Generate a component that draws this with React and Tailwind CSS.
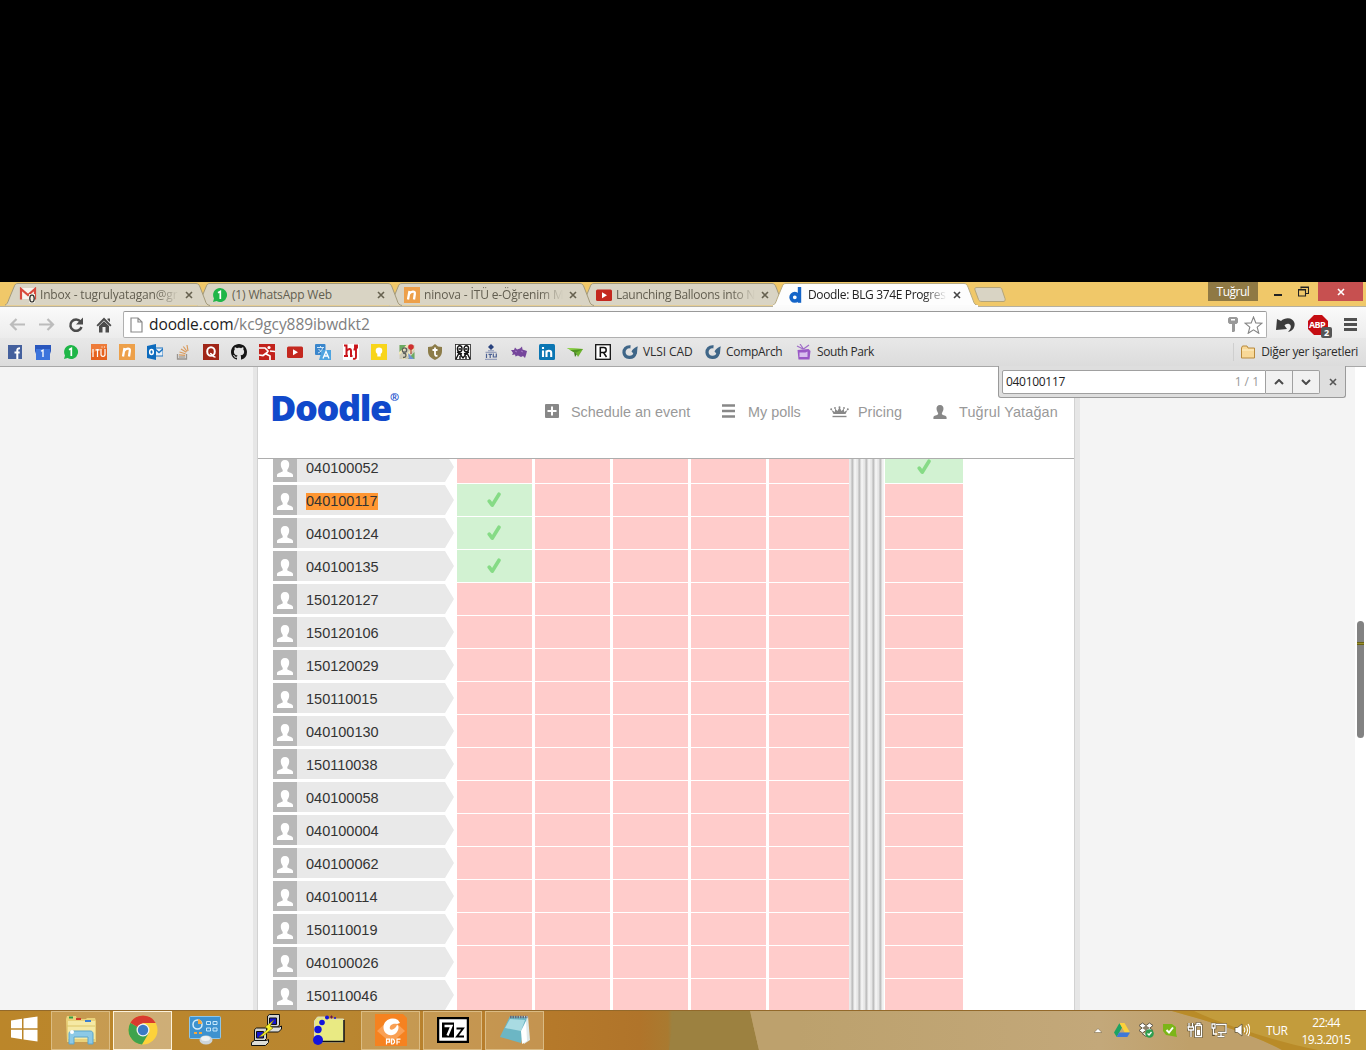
import React from "react";

const UI = "font-['Open_Sans','Noto_Sans',sans-serif]";

/* ---------- small helpers ---------- */

function Svg({ w = 16, h = w, vb, className = "", children }) {
  return (
    <svg width={w} height={h} viewBox={vb || `0 0 ${w} ${h}`} className={"block shrink-0 " + className} fill="none">
      {children}
    </svg>
  );
}

const Close = ({ color = "#66614f", s = 8 }) => (
  <Svg w={s} vb="0 0 8 8">
    <path d="M1 1l6 6M7 1L1 7" stroke={color} strokeWidth="1.600" />
  </Svg>
);

/* ---------- favicons ---------- */

const Gmail = () => (
  <Svg w={18} h={16} className="-ml-[1px]">
    <path d="M1 1h16v11H1z" fill="#f7f3ee" />
    <path d="M2 12.500V2l7 6 7-6v10.500" stroke="#d8493c" strokeWidth="2.200" />
    <rect x="10" y="7" width="6" height="9" fill="#f3efe2" />
    <ellipse cx="13" cy="11.500" rx="2.200" ry="3.500" stroke="#222" strokeWidth="1.200" />
  </Svg>
);
const WhatsApp = () => (
  <Svg>
    <path d="M8 1a7 7 0 1 1-3.400 13.100L1 15l1-3.500A7 7 0 0 1 8 1z" fill="#1fb648" />
    <path d="M6 5.800L8.300 4.500V12" stroke="#fff" strokeWidth="1.700" />
  </Svg>
);
const Ninova = () => (
  <Svg>
    <rect width="16" height="16" fill="#eda04a" />
    <path d="M5.500 4L4 12.500M5 7C7 4 11.500 3.500 10.800 7L10 12.500" stroke="#fff" strokeWidth="2.300" />
  </Svg>
);
const YouTube = () => (
  <Svg>
    <rect y="2.500" width="16" height="11.500" rx="1.500" fill="#c4281f" />
    <path d="M6 5.200v6l5-3z" fill="#fff" />
  </Svg>
);
const DoodleD = () => (
  <Svg>
    <circle cx="6.800" cy="10.300" r="3.700" stroke="#1565c8" strokeWidth="3.600" />
    <path d="M11.500 0v15.800" stroke="#1565c8" strokeWidth="3.400" />
  </Svg>
);
const Facebook = () => (
  <Svg>
    <rect x="1" y="1" width="14" height="14" fill="#44609d" />
    <path d="M10.300 15V6.200c0-1.700.7-2 2.700-2M7.500 8.500h5.200" stroke="#fff" strokeWidth="2" />
  </Svg>
);
const Calendar = () => (
  <Svg>
    <path d="M0 1h16v6l-1 3H1L0 7z" fill="#2a57bd" />
    <path d="M1 5h14v11H1z" fill="#3c74dc" />
    <path d="M6 7.300l2-1.200V13" stroke="#fff" strokeWidth="1.300" />
  </Svg>
);
const Itu = () => (
  <Svg>
    <rect width="16" height="16" fill="#e5611e" />
    <path d="M0 0h16v4L0 9z" fill="#ee7c3a" />
    <path d="M2 5v8M4.500 5.800h4M6.500 5v8M10 5v5.500c0 2.500 4 2.500 4 0V5" stroke="#fff" strokeWidth="1.200" />
    <path d="M10.500 3h1M13 3h1" stroke="#fff" />
  </Svg>
);
const Outlook = () => (
  <Svg>
    <rect x="7" y="4" width="9" height="8" fill="#e8f0f8" stroke="#1a72c0" />
    <path d="M8 5l4 3.500L16 5" stroke="#1a72c0" strokeWidth="1.500" />
    <path d="M0 2l9-2v16l-9-2z" fill="#0d6bbd" />
    <ellipse cx="4.500" cy="8" rx="1.800" ry="2.500" stroke="#fff" strokeWidth="1.500" />
  </Svg>
);
const Stack = () => (
  <Svg>
    <path d="M2.500 10v5h9v-5" stroke="#98938d" strokeWidth="1.300" />
    <path d="M4 13h6" stroke="#9a948c" strokeWidth="1.200" />
    <path d="M4 10.800l6 .6M4.500 8l6 1.800M6 5l5.300 3.300M8.300 2.500l3.800 5M12 1l1 6" stroke="#d99a5c" strokeWidth="1.200" />
  </Svg>
);
const Quora = () => (
  <Svg>
    <rect width="16" height="16" fill="#a02517" />
    <ellipse cx="8" cy="7.500" rx="3.800" ry="4.300" stroke="#fff" strokeWidth="2" />
    <path d="M7 9.500c3 0 2 4 5.500 3.500" stroke="#fff" strokeWidth="1.500" />
  </Svg>
);
const Github = () => (
  <Svg>
    <path
      fill="#151515"
      d="M8 0C3.580 0 0 3.580 0 8c0 3.540 2.290 6.530 5.470 7.590.4.070.55-.17.55-.38 0-.19-.01-.82-.01-1.490-2.010.37-2.530-.49-2.690-.94-.09-.23-.48-.94-.82-1.130-.28-.15-.68-.52-.01-.53.63-.01 1.080.58 1.230.82.720 1.210 1.870.87 2.330.66.070-.52.280-.87.510-1.070-1.780-.2-3.640-.89-3.640-3.950 0-.87.310-1.590.82-2.150-.08-.2-.36-1.020.08-2.120 0 0 .67-.21 2.200.82.640-.18 1.320-.27 2-.27s1.360.09 2 .27c1.530-1.040 2.200-.82 2.200-.82.440 1.100.160 1.920.080 2.120.510.560.820 1.270.820 2.150 0 3.070-1.870 3.750-3.650 3.950.290.250.540.730.540 1.480 0 1.070-.01 1.930-.01 2.200 0 .210.150.460.550.380A8.010 8.010 0 0 0 16 8c0-4.420-3.580-8-8-8z"
    />
  </Svg>
);
const RedRunner = () => (
  <Svg>
    <path d="M0 0h16v16H0z" fill="#c2221c" />
    <circle cx="10" cy="3.500" r="1.600" fill="#fff" />
    <path d="M0 4h6l3 3-2 3 4 2v4M7.500 9L4 11.500 0 11M11 7l5 .5" stroke="#fff" strokeWidth="1.700" />
  </Svg>
);
const Translate = () => (
  <Svg>
    <rect width="10.500" height="11" rx="1" fill="#3a86cc" />
    <path d="M2 3.500h7M5.500 2v2M3 9c3-1 4-3 4.500-5M3.500 5l4 4" stroke="#cfe6f8" />
    <path d="M7 6h9v10H4z" fill="#4ea4e0" />
    <path d="M8 14.500l3-7 3 7M9.500 12h4" stroke="#fff" strokeWidth="1.300" />
  </Svg>
);
const Hj = () => (
  <Svg>
    <rect width="16" height="16" fill="#fff" />
    <path d="M1 1.500h2.500V12M1 12h4M3.500 7c2-3 4.500-2.500 4.500 0v5M7 12h2.500" stroke="#c9141a" strokeWidth="2" />
    <path d="M10.500 5.500H13V13c0 2-1.500 2-3 1.700M12 1.500h2v2h-2z" stroke="#c9141a" strokeWidth="1.900" />
  </Svg>
);
const Keep = () => (
  <Svg>
    <rect width="16" height="16" fill="#f8d51b" />
    <circle cx="8" cy="6.800" r="3.300" fill="#fff" />
    <path d="M6.300 9h3.400v3.500H6.300z" fill="#fff" />
  </Svg>
);
const Maps = () => (
  <Svg>
    <rect x=".5" y="1" width="15" height="14" fill="#cfccba" />
    <path d="M.5 1h7l-7 7zM15.500 8v7H9z" fill="#6cab62" />
    <path d="M0 10L9 1M4 15L15 4" stroke="#f2e9b8" strokeWidth="2" />
    <path d="M9 9l6 6h-5z" fill="#6e92d4" />
    <circle cx="5.500" cy="6" r="2.200" stroke="#5b5f5b" strokeWidth="1.300" />
    <path d="M4 9c4 0 4 4.500 0 4.500" stroke="#5b5f5b" strokeWidth="1.300" />
    <circle cx="12" cy="3" r="2.800" fill="#cf3030" />
    <path d="M12 5v5" stroke="#a32626" />
  </Svg>
);
const Turnitin = () => (
  <Svg>
    <path d="M1 3l4-.5L8 0l3 2.500 4 .5v4c0 5-3 7-7 9-4-2-7-4-7-9z" fill="#8c7c49" />
    <path d="M8 3.500V10c0 2 1 2 2.500 1.700M5.500 6h5" stroke="#fff" strokeWidth="1.800" />
  </Svg>
);
const Faces = () => (
  <Svg>
    <rect x=".5" y=".5" width="15" height="15" fill="#fff" stroke="#222" strokeWidth=".8" />
    <ellipse cx="4.700" cy="4.700" rx="2.300" ry="3" stroke="#111" strokeWidth="1.400" />
    <ellipse cx="11.300" cy="4.700" rx="2.300" ry="3" stroke="#111" strokeWidth="1.400" />
    <path d="M3.500 5H6M10 5h2.500M1 15l3-6 4 5 4-5 3 6M2 8l5 2M9 10l5-2M5 12v3M11 12v3" stroke="#111" strokeWidth="1.400" />
  </Svg>
);
const ItuBee = () => (
  <Svg>
    <path d="M8 0l3 3-3 3-3-3z" fill="#29427e" />
    <path d="M2.500 8.300h11M5 6.800h6" stroke="#8793b5" />
    <path d="M3.500 9.800V14M5.500 10.300h3.500M7.200 10v4M10.300 9.500V13h3V9.500" stroke="#4a5f92" strokeWidth="1.200" />
    <path d="M2 15.300h12" stroke="#8793b5" />
  </Svg>
);
const Bat = () => (
  <Svg>
    <path d="M0 6l3 0 1-2.500 2 2 3-1 2-2 .5 3 4.500 1.500-1 4-1 3-2-2-2 1-3-1.500-2.500 1L4 10.500 1 11l1-2z" fill="#75469b" />
    <path d="M4 7l2 1M10 7l2 1" stroke="#a67cc6" />
  </Svg>
);
const LinkedIn = () => (
  <Svg>
    <rect width="16" height="16" rx="1.500" fill="#0b76b3" />
    <path d="M4 6.500V13M4 3v2M7.500 13V6.500M7.500 9c0-3 4.700-3 4.700 0v4" stroke="#fff" strokeWidth="2.100" />
  </Svg>
);
const Plane = () => (
  <Svg>
    <path d="M0 4l16 1-5 8-2-4z" fill="#6db52f" />
    <path d="M0 4l16 1-9 3z" fill="#8fd24a" />
    <path d="M7 8l1 5 2-3z" fill="#3f7a1c" />
    <path d="M3 6L16 5 8 9z" fill="#4f9422" />
  </Svg>
);
const RBox = () => (
  <Svg>
    <rect x=".7" y=".7" width="14.600" height="14.600" fill="#fff" stroke="#111" strokeWidth="1.300" />
    <path d="M5.300 13V3.500h3.500c3.200 0 3.200 5 0 5H5.300M8.500 8.500l3 4.500" stroke="#111" strokeWidth="1.500" />
  </Svg>
);
const Swirl = () => (
  <Svg>
    <path d="M8.500 2.800C4 2.300 1.800 5.500 2 8.500c.6 6.300 9.600 6.500 11.200.8" stroke="#3f6688" strokeWidth="3.200" />
    <path d="M15.800 2.500c-1 0-4.500 1.500-6.300 5l2.300 2.500 3 0c.6-3 .3-5 1-7.500z" fill="#3f6688" />
  </Svg>
);
const Tv = () => (
  <Svg>
    <path d="M4 0l3.500 5M1 2l6 3M13 1L7.500 5" stroke="#a06cc8" strokeWidth="1.200" />
    <path d="M1.500 6l11-1 2 2-1 8.500H2.500z" fill="#9a58c6" />
    <path d="M3.500 8.500h6l2-1V13h-8z" fill="#d9bfee" />
  </Svg>
);
const Folder = () => (
  <Svg>
    <path d="M1.500 4l1-2h4.500l1 2h6.500v10h-13z" fill="#f8d897" stroke="#b98a3c" />
    <path d="M2 6h12" stroke="#fdefc8" />
  </Svg>
);

/* ---------- tabs ---------- */

const tabs = [
  { title: "Inbox - tugrulyatagan@gr", icon: <Gmail />, track: "tracking-[-0.17px]", z: "z-[5]", fade: true },
  { title: "(1) WhatsApp Web", icon: <WhatsApp />, track: "tracking-[-0.17px]", z: "z-[4]" },
  { title: "ninova - İTÜ e-Öğrenim M", icon: <Ninova />, track: "tracking-[-0.14px]", z: "z-[3]", fade: true },
  { title: "Launching Balloons into N", icon: <YouTube />, track: "tracking-[-0.28px]", z: "z-[2]", fade: true },
  { title: "Doodle: BLG 374E Progres", icon: <DoodleD />, track: "tracking-[-0.35px]", z: "z-[6]", active: true, fade: true },
];

function Tab({ t }) {
  return (
    <div className={"relative flex h-[25px] w-[192px] shrink-0 items-center pl-[15px] " + t.z}>
      <svg className="absolute left-0 top-0" width="206" height="25" fill="none">
        <path
          d="M-1 23.500C2 23 3 20 4 17L9 5C10 2 11 1.500 13 1.500H191C193 1.500 194 2.500 195 5L200 18C201 21.500 202 23 205 23.500"
          fill={t.active ? "#fdfdfd" : "#d9d4c4"}
          stroke={t.active ? "#b9ac83" : "#a39a7b"}
        />
        {t.active && <path d="M0 24h205" stroke="#fbfbfb" strokeWidth="2" />}
      </svg>
      <div className="relative flex w-5 justify-start">{t.icon}</div>
      <div
        className={
          "relative w-[145px] whitespace-nowrap text-[12px] leading-[18px] " +
          t.track +
          (t.fade ? " [mask-image:linear-gradient(to_right,black_116px,transparent_139px)]" : "") +
          (t.active ? " text-[#222]" : " text-[#625e50]")
        }
      >
        {t.title}
      </div>
      <div className="relative">
        <Close color={t.active ? "#444" : "#66614f"} />
      </div>
    </div>
  );
}

function TabStrip() {
  return (
    <div className="flex h-6 items-start bg-[#f0c869] pl-[5px]">
      {tabs.map((t) => (
        <Tab key={t.title} t={t} />
      ))}
      <svg className="ml-[9px] mt-[4px]" width="32" height="18" fill="none">
        <path d="M1 4C.5 2 1 1.500 3 1.500h22c2 0 2.500.5 3 2l3 9c.5 2 0 3-2 3H8c-2 0-3-.5-3.500-2z" fill="#d9d4c4" stroke="#b5a577" />
      </svg>
      <div className="ml-auto flex h-[19px] items-center">
        <div className="flex h-[19px] w-[50px] items-center justify-center bg-[#8f7944] text-[12px] tracking-[-0.5px] text-white">Tuğrul</div>
        <div className="ml-[16px] mt-[6px] h-[2px] w-2 bg-[#222]" />
        <Svg w={11} h={11} className="ml-[16px]">
          <path d="M3 2.500V1h7.500v6.500H8M.5 3.500h7v6.500h-7zM3 1.500h7.500M.5 4h7" stroke="#222" strokeWidth="1.100" />
        </Svg>
        <div className="ml-[9px] mr-[3px] flex h-[19px] w-[45px] items-center justify-center bg-[#c75050]">
          <Close color="#fff" />
        </div>
      </div>
    </div>
  );
}

/* ---------- toolbar ---------- */

function Toolbar() {
  return (
    <div className="flex h-[32px] items-center border-t border-[#b5b0a0] bg-gradient-to-b from-[#fafafa] to-[#ececec] pt-[4px]">
      <Svg w={17} h={15} className="ml-[9px]">
        <path d="M7.500 2L2 7.500 7.500 13M2.500 7.500H16" stroke="#bcbcbc" strokeWidth="2.200" />
      </Svg>
      <Svg w={17} h={15} className="ml-[12px]">
        <path d="M9.500 2L15 7.500 9.500 13M14.500 7.500H1" stroke="#bcbcbc" strokeWidth="2.200" />
      </Svg>
      <Svg w={16} h={16} className="ml-[13px]">
        <path d="M12.500 4.500A5.700 5.700 0 1 0 13.500 10" stroke="#4c4c4c" strokeWidth="2.500" />
        <path d="M15 .5v7H8z" fill="#4c4c4c" />
      </Svg>
      <Svg w={16} h={16} className="ml-[12px]">
        <path d="M8 .5l7.500 7.800-1.300 1.200L8 3.500 1.800 9.500.5 8.300zM11.500 1.500H14V5l-2.500-2.300z" fill="#4c4c4c" />
        <path d="M3 9l5-4.700L13 9v6.500H9.500V10h-3v5.500H3z" fill="#4c4c4c" />
      </Svg>
      <div className="ml-[11px] flex h-[27px] w-[1144px] items-center rounded-[2px] border border-[#b0b0b0] border-t-[#999] bg-white pl-[6px]">
        <Svg w={13} h={16}>
          <path d="M1 1h7l4 4v10H1zM8 1v4h4" stroke="#8a8a8a" strokeWidth="1.200" />
        </Svg>
        <div className="ml-[6px] whitespace-nowrap pb-[2px] text-[15.5px] leading-5 tracking-[-0.09px] text-[#808080]">
          <span className="text-[#1c1c1c]">doodle.com</span>/kc9gcy889ibwdkt2
        </div>
        <Svg w={10} h={15} className="ml-auto">
          <path fillRule="evenodd" d="M1.500 0h7L10 1.500v4L8.500 7H7v7l-1 1H4V7H1.500L0 5.500v-4zM3 2v1.500h4V2z" fill="#999" />
        </Svg>
        <Svg w={19} h={18} className="ml-[6px] mr-[3px]">
          <path d="M9.500 1l2.300 5.900 6.200.3-4.800 4 1.600 6.100-5.300-3.400-5.300 3.400 1.600-6.100-4.800-4 6.200-.3z" stroke="#858585" strokeWidth="1.100" />
        </Svg>
      </div>
      <Svg w={20} h={17} className="ml-[9px]">
        <path d="M1 3l4 2c4-4 12-4 13.500 2 .7 4-1.500 8-6.500 9 3-3 4-7 1-8-2-.5-3.500.5-4.500 1.500l2.500 3.500-11 1z" fill="#3c3c3c" />
      </Svg>
      <div className="relative ml-[12px] h-[20px] w-[24px]">
        <Svg w={20} h={20}>
          <path d="M6 0h8l6 6v8l-6 6H6l-6-6V6z" fill="#c50d12" />
        </Svg>
        <span className="absolute left-[1px] top-[4px] text-[9px] font-bold leading-[11px] tracking-[-0.6px] text-white">ABP</span>
        <span className="absolute left-[13px] top-[12px] h-[11px] w-[11px] rounded-[2px] bg-[#555] text-center text-[9px] font-bold leading-[11px] text-white">2</span>
      </div>
      <Svg w={13} h={13} className="ml-[12px]">
        <path d="M0 1.500h13M0 6.500h13M0 11.500h13" stroke="#505050" strokeWidth="2.800" />
      </Svg>
    </div>
  );
}

const bookmarkIcons = [
  Facebook, Calendar, WhatsApp, Itu, Ninova, Outlook, Stack, Quora, Github, RedRunner, YouTube,
  Translate, Hj, Keep, Maps, Turnitin, Faces, ItuBee, Bat, LinkedIn, Plane, RBox,
];

function Bookmark({ icon, label, cls }) {
  return (
    <div className={"flex shrink-0 items-center gap-[5px] whitespace-nowrap text-[12px] text-[#2c2c2c] " + cls}>
      {icon}
      <span>{label}</span>
    </div>
  );
}

function Bookmarks() {
  return (
    <div className="flex h-[29px] items-center border-b border-[#a8a8a8] bg-gradient-to-b from-[#e8e8e8] to-[#dcdcdc] pl-[1px]">
      {bookmarkIcons.map((Icon, i) => (
        <div key={i} className="flex w-7 shrink-0 justify-center">
          <Icon />
        </div>
      ))}
      <Bookmark icon={<Swirl />} label="VLSI CAD" cls="ml-[5px] w-[83px] tracking-[-0.1px]" />
      <Bookmark icon={<Swirl />} label="CompArch" cls="w-[90px] tracking-[-0.3px]" />
      <Bookmark icon={<Tv />} label="South Park" cls="ml-[1px] tracking-[-0.4px]" />
      <div className="ml-auto mr-[8px] flex items-center border-l border-[#cfcfcf] pl-[6px]">
        <Bookmark icon={<Folder />} label="Diğer yer işaretleri" cls="tracking-[-0.3px]" />
      </div>
    </div>
  );
}

/* ---------- find bar ---------- */

function FindBar() {
  return (
    <div className={"absolute left-[998px] top-[-1px] z-20 flex h-[32px] w-[348px] items-center rounded-b-[3px] border border-t-0 border-[#9a9a9a] bg-[#dedede] pl-[3px] text-[12px] " + UI}>
      <div className="flex h-6 w-[264px] items-center justify-between rounded-l-[2px] border border-[#a0a0a0] bg-white pl-[3px] pr-[6px]">
        <span className="tracking-[-0.3px] text-[#222]">040100117</span>
        <span className="text-[#999]">1 / 1</span>
      </div>
      <div className="flex h-6 w-[27px] items-center justify-center border-y border-r border-[#a0a0a0] bg-[#f1f1f1]">
        <Svg w={10} h={6}>
          <path d="M1 5l4-4 4 4" stroke="#4a4a4a" strokeWidth="2" />
        </Svg>
      </div>
      <div className="flex h-6 w-[27px] items-center justify-center rounded-r-[2px] border-y border-r border-[#a0a0a0] bg-[#f1f1f1]">
        <Svg w={10} h={6}>
          <path d="M1 1l4 4 4-4" stroke="#4a4a4a" strokeWidth="2" />
        </Svg>
      </div>
      <div className="ml-[9px]">
        <Close color="#555" />
      </div>
    </div>
  );
}

/* ---------- poll page ---------- */

const Person = ({ color = "#fff", w = 16, h = 17 }) => (
  <Svg w={w} h={h} vb="0 0 16 17">
    <path d="M8 0c3 0 4.500 2 4.200 5C12 7.500 11 8.500 10.300 10v1.200c1 1.300 5.700 1.300 5.700 4V17H0v-1.800c0-2.700 4.700-2.700 5.700-4V10C5 8.500 4 7.500 3.800 5 3.500 2 5 0 8 0z" fill={color} />
  </Svg>
);

const Check = () => (
  <Svg w={14} h={16} className="mr-[1px]">
    <path d="M2.200 9.200l3 4L12 2.200" stroke="#86db86" strokeWidth="3.600" strokeLinecap="round" strokeLinejoin="round" />
  </Svg>
);

const people = [
  { id: "040100052", picks: [5] },
  { id: "040100117", picks: [0], found: true },
  { id: "040100124", picks: [0] },
  { id: "040100135", picks: [0] },
  ...["150120127", "150120106", "150120029", "150110015", "040100130", "150110038", "040100058", "040100004", "040100062", "040100114", "150110019", "040100026", "150110046"].map(
    (id) => ({ id, picks: [] })
  ),
];

function Cell({ on, cls }) {
  return (
    <div className={"flex h-8 shrink-0 items-center justify-center " + (on ? "bg-[#d2f2d2] " : "bg-[#ffcccb] ") + cls}>
      {on && <Check />}
    </div>
  );
}

function Row({ p }) {
  const on = (i) => p.picks.includes(i);
  return (
    <div className="flex h-[33px] pl-[15px]">
      <div className="mr-[3px] mt-[1px] flex h-[30px] w-[181px] shrink-0 items-center bg-[#e9e9e9] [clip-path:polygon(0_0,172px_0,100%_50%,172px_100%,0_100%)]">
        <div className="flex h-full w-6 items-end justify-center bg-[#b8b8b8] pb-[5px]">
          <Person />
        </div>
        <span className={"ml-[9px] mt-[2px] text-[14.500px] leading-[17px] text-[#333] " + (p.found ? "bg-[#ff9632]" : "")}>{p.id}</span>
      </div>
      <Cell on={on(0)} cls="mr-[3px] w-[75px]" />
      <Cell on={on(1)} cls="mr-[3px] w-[75px]" />
      <Cell on={on(2)} cls="mr-[3px] w-[75px]" />
      <Cell on={on(3)} cls="mr-[3px] w-[75px]" />
      <Cell on={on(4)} cls="w-[80px]" />
      <div className="h-[33px] w-[36px] shrink-0 border-r border-white bg-[repeating-linear-gradient(to_right,#ececec_0px,#e4e4e4_2px,#b9b9b9_3px,#c4c4c4_4px,#efefef_5px,#f4f4f4_7px)]" />
      <Cell on={on(5)} cls="w-[78px]" />
    </div>
  );
}

function Header() {
  return (
    <div className="flex h-[92px] shrink-0 items-center border-b border-[#adadad] pl-[14px] text-[14.4px] text-[#999]">
      <div className={"relative mt-[-9px] h-10 w-[273px] whitespace-nowrap text-[36px] font-extrabold leading-10 tracking-[-1.4px] text-[#1149cb] " + UI}>
        <span className="-ml-[2px]">Doodle</span>
        <span className="absolute left-[118px] top-[3px] text-[11px] font-bold leading-[12px] tracking-normal">®</span>
      </div>
      <div className="flex w-[177px] items-center gap-[12px]">
        <Svg w={14} className="-mt-[2px]">
          <rect width="14" height="14" rx="1" fill="#888" />
          <path d="M7 2.500v9M2.500 7h9" stroke="#fff" strokeWidth="2" />
        </Svg>
        <span className="whitespace-nowrap">Schedule an event</span>
      </div>
      <div className="flex w-[108px] items-center gap-[13px]">
        <Svg w={13} h={14} className="-mt-[2px]">
          <path d="M0 1.500h13M0 7h13M0 12.500h13" stroke="#888" strokeWidth="2.700" />
        </Svg>
        <span className="whitespace-nowrap">My polls</span>
      </div>
      <div className="flex w-[103px] items-center gap-[9px]">
        <Svg w={19} h={12}>
          <path d="M3.500 8L1.500 4l3.500 2L5 2.500 7.500 5l2-4 2 4L14 2.500V6l3.500-2-2 4z" fill="#888" />
          <circle cx="1.200" cy="3.200" r="1" fill="#888" />
          <circle cx="17.800" cy="3.200" r="1" fill="#888" />
          <circle cx="9.500" cy="1.200" r="1" fill="#888" />
          <circle cx="5" cy="2" r=".9" fill="#888" />
          <circle cx="14" cy="2" r=".9" fill="#888" />
          <path d="M2.500 10.500h14" stroke="#888" strokeWidth="1.400" />
        </Svg>
        <span className="whitespace-nowrap">Pricing</span>
      </div>
      <div className="flex items-center gap-[12px]">
        <Person color="#888" w={14} h={14} />
        <span className="whitespace-nowrap tracking-[0.17px]">Tuğrul Yatağan</span>
      </div>
    </div>
  );
}

function Page() {
  return (
    <div className="relative flex h-[643px] bg-[#f4f4f4] pl-[253px] font-['Liberation_Sans',Arial,sans-serif]">
      <div className="flex w-[827px] flex-col border-x-[5px] border-[#e6e6e6] bg-white">
        <div className="-ml-[1px] flex min-h-0 flex-1 flex-col border-x border-[#d2d2d2]">
          <Header />
          <div className="min-h-0 flex-1 overflow-hidden">
            <div className="-mt-2">
              {people.map((p) => (
                <Row key={p.id} p={p} />
              ))}
            </div>
          </div>
        </div>
      </div>
      <div className="ml-auto w-[11px] bg-white pl-[2px] pt-[254px]">
        <div className="h-[117px] w-[7px] rounded-full bg-[#828282] pt-[21px]">
          <div className="h-[3px] border-y border-[#6b6412] bg-[#9a9030]" />
        </div>
      </div>
      <FindBar />
    </div>
  );
}

/* ---------- taskbar ---------- */

const Win = () => (
  <Svg w={28} h={26} className="-mt-[2px] mr-[3px]">
    <path d="M1 4.500l11-1.700V12.300H1zM13.500 2.600L27.500.5v11.800h-14zM1 13.700h11v9.500L1 21.500zM13.500 13.700h14v11.800l-14-2z" fill="#fff" />
  </Svg>
);
const Explorer = () => (
  <Svg w={34} h={32}>
    <path d="M2 5l1-3h9l1 3h9l1-1h8l1 3v21H3z" fill="#e9d27b" />
    <path d="M4 7h27v18H4z" fill="#f5e9a4" />
    <path d="M3 12h28" stroke="#dcc568" />
    <path d="M5 3.500h4" stroke="#2f9e44" strokeWidth="2" />
    <path d="M12 5h5" stroke="#cf3a2a" strokeWidth="2" />
    <path d="M21 7h6" stroke="#3b7fd0" strokeWidth="2" />
    <path d="M5 30V20c0-2 1-3 3-3h18c2 0 3 1 3 3v10h-5v-7H10v7z" fill="#8cc9e6" stroke="#5aa5cc" />
    <circle cx="8" cy="18" r="2" fill="#fff" />
  </Svg>
);
const Chrome = () => (
  <Svg w={30} vb="0 0 30 30">
    <circle cx="15" cy="15" r="14.500" fill="#fdd23b" />
    <path d="M15 15L2.400 7.800A14.500 14.500 0 0 0 14 29.500l6.500-11z" fill="#3fa34d" />
    <path d="M9.500 12L2.400 7.800A14.500 14.500 0 0 1 27.700 8H15z" fill="#d83a2f" />
    <circle cx="15" cy="15" r="6.500" fill="#f3f3f3" />
    <circle cx="15" cy="15" r="5.200" fill="#3c7bc4" />
  </Svg>
);
const Panel = () => (
  <Svg w={34} h={30}>
    <rect x="1.500" y="1.500" width="31" height="22" rx="1" fill="#3d92cf" stroke="#8cc6ea" />
    <circle cx="9.500" cy="9.500" r="4.500" stroke="#d5eefc" strokeWidth="1.500" />
    <path d="M10 9V4a5 5 0 0 1 4 5z" fill="#f5a83c" />
    <path d="M18.500 6.500h4v3h-4zM25 6.500h4v3h-4zM18.500 13h4v3h-4zM25 13h4v3h-4z" stroke="#c7e8fb" />
    <path d="M6 18h3M11 18h3" stroke="#f5a83c" strokeWidth="2" />
    <ellipse cx="18" cy="25" rx="6.500" ry="4.500" fill="#cdd5d9" />
    <ellipse cx="17.500" cy="23.500" rx="4.500" ry="2.500" fill="#eef2f3" />
  </Svg>
);
const Computer = ({ x, y }) => (
  <g transform={`translate(${x} ${y})`} stroke="#111">
    <path d="M3 2l2-1.500h10V11l-2 2H3z" fill="#d4d4d0" />
    <path d="M5 4h7v6.500H5z" fill="#1515cc" />
    <path d="M0 15l3-2h12l2-1v3l-3 3H0z" fill="#deded8" />
  </g>
);
const Putty = () => (
  <Svg w={32} h={32}>
    <Computer x={13.5} y={0} />
    <Computer x={0.5} y={13.5} />
    <path d="M23 6l-9 7 3 2-9 8 4-1 10-8-3-2z" fill="#f6ef2a" stroke="#6b6500" strokeWidth=".6" />
  </Svg>
);
const Dots = () => (
  <Svg w={34} h={32}>
    <path d="M2.500 27V7l3-4h8l2 2h16v23H5z" fill="#e9ea83" stroke="#d9d9c0" />
    <path d="M32 6v21.500H8" stroke="#111" strokeWidth="1.500" />
    <circle cx="6" cy="26" r="5" fill="#1414dc" />
    <circle cx="6" cy="15.500" r="3.700" fill="#1414dc" />
    <circle cx="10" cy="8.500" r="2.800" fill="#1414dc" />
    <circle cx="15" cy="3.500" r="2" fill="#1414dc" />
    <path d="M18 3h3M19.500 1.500v3" stroke="#6b1452" />
    <circle cx="23" cy="4" r="1" fill="#1414dc" />
  </Svg>
);
const Foxit = () => (
  <Svg w={32} h={32}>
    <path d="M0 0h28l4 4v28H0z" fill="#f58220" />
    <path d="M2 17L16 4l14 13-14 12z" fill="#f9a055" />
    <path d="M23 6C16 2 8 7 8.500 14c.5 7 9 10 13.500 4 2-3 2-7 0-7-1 3-5 6-7 4-1-3 2-6 7-5l3-1z" fill="#fff" />
    <path d="M11.500 30.500v-5.300h3v3h-3M16.500 25v5h1.500l1.500-1.500v-2L18 25zM22 30.500v-5.300h3.500M22 28h3" stroke="#fff" strokeWidth="1.200" />
  </Svg>
);
const SevenZip = () => (
  <Svg w={32} h={26}>
    <rect x="1" y="1" width="30" height="24" fill="#fff" stroke="#000" strokeWidth="2.500" />
    <path d="M5 5.500h12v15H5z" fill="#000" />
    <path d="M7.500 9h7L10.500 18.500" stroke="#fff" strokeWidth="2.300" />
    <path d="M19.500 11.500h6.500L20 19.500h7" stroke="#000" strokeWidth="1.900" />
  </Svg>
);
const Notepad = () => (
  <Svg w={32} h={32}>
    <path d="M12 3l17-1 2 24-6 4z" fill="#dfe9ea" />
    <path d="M11 2l17 1-6 26L1 23z" fill="#6cb6c4" />
    <path d="M11 5l15 1-4 11L6 14z" fill="#a9dbe2" />
    <path d="M22 17l5-10 1 20-5 3z" fill="#fff" />
    <path d="M11 3h18" stroke="#667" strokeWidth="2.500" strokeDasharray="1.500 1" />
  </Svg>
);

const BTN = "border border-[#e0c490]/80 bg-[#d9bb8a]/40";
const apps = [
  { icon: <Explorer />, box: BTN },
  { icon: <Chrome />, box: "border border-[#fdf3dc] bg-[#dccaa8]/60" },
  { icon: <Panel />, box: "" },
  { icon: <Putty />, box: "" },
  { icon: <Dots />, box: "" },
  { icon: <Foxit />, box: BTN },
  { icon: <SevenZip />, box: BTN },
  { icon: <Notepad />, box: BTN },
];

const trayIcons = [
  <Svg key="up" w={8} h={5}>
    <path d="M0 4.500L4 .5l4 4z" fill="#fff" stroke="#6b5a38" strokeWidth=".5" />
  </Svg>,
  <Svg key="drive" w={16} h={14}>
    <path d="M5.500 0L0 9.500 2.700 14 8 4.600z" fill="#1da362" />
    <path d="M5.500 0h5L16 9.500h-5.300z" fill="#fcd13b" />
    <path d="M5 9.500h11L13.300 14H2.700z" fill="#3f78d8" />
  </Svg>,
  <Svg key="dropbox" w={16} h={16}>
    <path d="M4.500 1L8 3.500 11.500 1 15 3.500 12 6l3 2.500-3.500 2.500L8 8.500 4.500 11 1 8.500 4 6 1 3.500zM4 11.500l4 3 4-3" fill="#fff" stroke="#5d5647" />
    <path d="M4 6l4-2.500L12 6 8 8.500z" fill="#8c806a" />
    <circle cx="11.500" cy="11.500" r="4.300" fill="#2e9e4f" />
    <path d="M9.500 11.500l1.500 1.500 2.500-3" stroke="#fff" strokeWidth="1.300" />
  </Svg>,
  <Svg key="green" w={16} h={16}>
    <path d="M1 2h9l4 3v6l1 4-5-1-6-1-3-4z" fill="#7cb518" />
    <path d="M4.500 8l2.500 2.500L11 5.500" stroke="#fff" strokeWidth="2" />
  </Svg>,
  <Svg key="battery" w={16} h={16}>
    <path d="M2 1v4M5.500 1v4M1 5h5.500v3h-5zM4 8v7M8.500 3.500h6v11h-6zM10 1.500h3v2h-3z" stroke="#574a2e" strokeWidth="2.600" />
    <path d="M2 1v4M5.500 1v4M1 5h5.500v3h-5zM4 8v7M8.500 3.500h6v11h-6zM10 1.500h3v2h-3z" stroke="#fff" strokeWidth="1.300" />
    <path d="M10 8h3v5h-3z" fill="#fff" />
  </Svg>,
  <Svg key="net" w={16} h={16}>
    <path d="M5 2.500h10v8H7M10 11v3M6.500 14.500h7M1 2h3v4H1zM2.500 6v8" stroke="#574a2e" strokeWidth="2.600" />
    <path d="M5 2.500h10v8H7M10 11v3M6.500 14.500h7M1 2h3v4H1zM2.500 6v6H6" stroke="#fff" strokeWidth="1.300" />
  </Svg>,
  <Svg key="vol" w={16} h={16} className="-ml-[2px]">
    <path d="M1 5.500h2.500L8 2v12l-4.500-3.500H1z" fill="#fff" stroke="#5d5034" strokeWidth=".8" />
    <path d="M10 5.500c1 1.500 1 3.500 0 5M12 3.500c2 2.500 2 6.500 0 9M14 2c2.500 3.500 2.500 8.500 0 12" stroke="#fff" strokeWidth="1.100" />
  </Svg>,
];

function Taskbar() {
  return (
    <div className="relative flex h-10 items-center bg-[linear-gradient(to_right,#bb862a_0,#b98630_350px,#b77b2a_520px,#b0742a_640px,#a97a30_668px,#9c8140_672px,#a3853f_750px,#bba06b_753px,#c3a87a_1100px,#bfa06a_1190px)] shadow-[inset_0_1px_0_#93692a]">
      <svg className="absolute left-0 top-[1px]" width="1366" height="39" fill="none">
        <path d="M674 0h76l9 39h-90z" fill="#9c8140" />
        <path d="M750 0h50v39h-41z" fill="#bda16d" />
        <path d="M1172 0h194v39h-84c-25-14-70-28-110-39z" fill="#c39c3c" />
        <path d="M1172 0h22c30 14 80 30 124 39h-36c-25-14-70-28-110-39z" fill="#b98b28" />
      </svg>
      <div className="relative flex w-[51px] justify-center">
        <Win />
      </div>
      <div className="relative flex gap-[3px]">
        {apps.map((a, i) => (
          <div key={i} className={"flex h-[39px] w-[59px] items-center justify-center " + a.box}>
            {a.icon}
          </div>
        ))}
      </div>
      <div className="relative ml-auto flex items-center">
        {trayIcons.map((icon, i) => (
          <div key={i} className="flex w-[24.2px] justify-center">
            {icon}
          </div>
        ))}
        <div className="ml-[11px] mt-[2px] w-[22px] text-[12px] tracking-[-0.4px] text-white">TUR</div>
        <div className="ml-[8px] mr-[10px] mt-[2px] w-[60px] text-center text-[12px] leading-[17px] tracking-[-0.6px] text-white">
          <div>22:44</div>
          <div>19.3.2015</div>
        </div>
      </div>
    </div>
  );
}

export default function App() {
  return (
    <div className={"flex h-[1050px] w-[1366px] flex-col overflow-hidden bg-black pt-[282px] " + UI}>
      <TabStrip />
      <Toolbar />
      <Bookmarks />
      <Page />
      <Taskbar />
    </div>
  );
}
